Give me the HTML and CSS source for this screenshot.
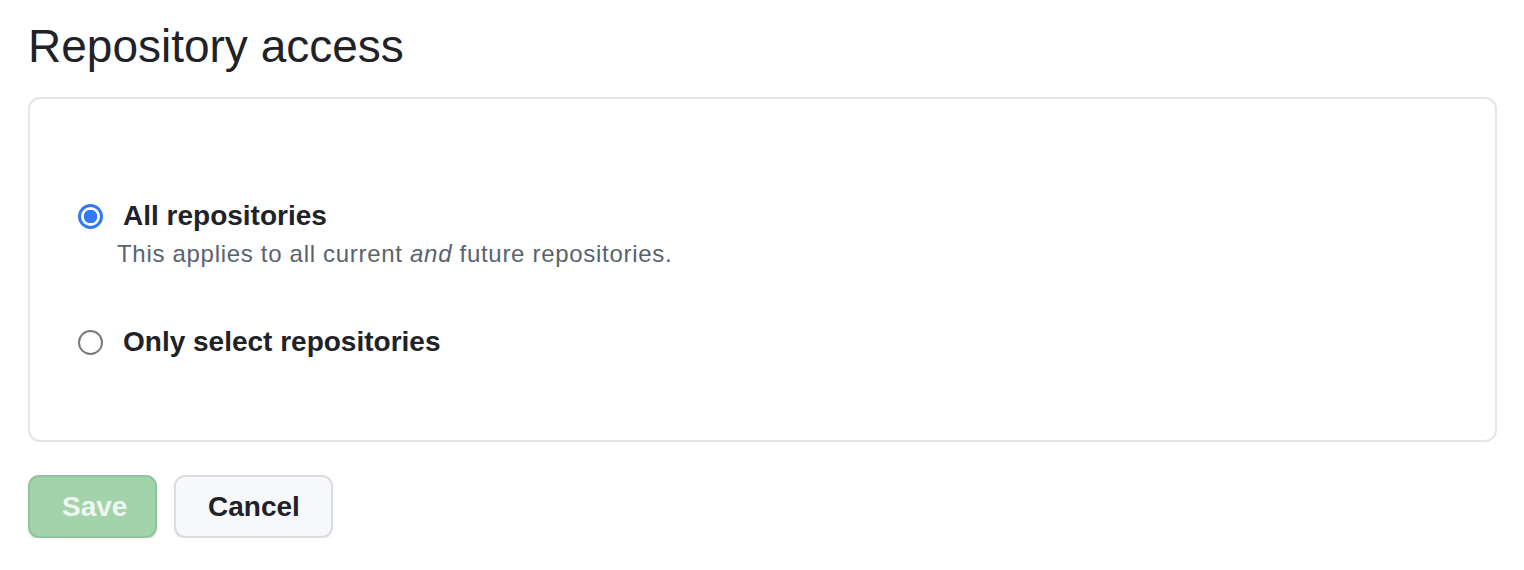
FILE: index.html
```html
<!DOCTYPE html>
<html lang="en">
<head>
<meta charset="utf-8">
<title>Repository access</title>
<link rel="stylesheet" href="styles.css">
</head>
<body>
<main class="page">
  <h1 class="title">Repository access</h1>
  <form class="form">
    <div class="box">
      <div class="option">
        <label class="option-row">
          <input class="radio" type="radio" name="access" checked>
          <span class="option-label">All repositories</span>
        </label>
        <p class="option-note">This applies to all current <em>and</em> future repositories.</p>
      </div>
      <div class="option option-second">
        <label class="option-row">
          <input class="radio" type="radio" name="access">
          <span class="option-label">Only select repositories</span>
        </label>
      </div>
    </div>
    <div class="actions">
      <button type="button" class="btn btn-save" disabled>Save</button>
      <button type="button" class="btn btn-cancel">Cancel</button>
    </div>
  </form>
</main>
</body>
</html>
```

FILE: styles.css
```css
html, body {
  margin: 0;
  padding: 0;
  background: #ffffff;
}

body {
  font-family: "Liberation Sans", Arial, sans-serif;
  color: #1f2328;
}

.page {
  padding: 17px 27px 0 28px;
}

.title {
  margin: 0;
  font-size: 46px;
  font-weight: 400;
  line-height: 58px;
  color: #1f2328;
}

.form {
  margin: 22px 0 0 0;
}

.box {
  border: 2px solid #e3e5e8;
  border-radius: 12px;
  padding: 99px 47px 80px 48px;
  display: flex;
  flex-direction: column;
}

.option-row {
  display: flex;
  align-items: center;
  gap: 20px;
  height: 36px;
}

.radio {
  -webkit-appearance: none;
  appearance: none;
  margin: 0;
  width: 25px;
  height: 25px;
  border-radius: 50%;
  border: 2px solid #7a7a7a;
  background: #ffffff;
  box-sizing: border-box;
  flex: none;
}

.radio:checked {
  border: 3px solid #3478f6;
  background: radial-gradient(circle, #3478f6 0 6.5px, #ffffff 7px);
}

.option-label {
  font-size: 28px;
  font-weight: 700;
  line-height: 36px;
  color: #1f2328;
}

.option-note {
  margin: 4px 0 0 39px;
  font-size: 24px;
  line-height: 32px;
  letter-spacing: 0.7px;
  color: #59636e;
}

.option-note em {
  font-style: italic;
}

.option-second {
  margin-top: 54px;
}

.actions {
  display: flex;
  gap: 17px;
  margin-top: 33px;
}

.btn {
  height: 63px;
  padding: 0 32px;
  border-radius: 11px;
  border: 2px solid;
  font-family: "Liberation Sans", Arial, sans-serif;
  font-size: 28px;
  font-weight: 700;
  box-sizing: border-box;
}

.btn-save {
  width: 129px;
  background: #a2d3aa;
  border-color: #8fc59a;
  color: #eef8f0;
  box-shadow: 0 2px 2px rgba(31, 35, 40, 0.12);
}

.btn-cancel {
  width: 159px;
  background: #f6f8fa;
  border-color: #dadcdf;
  color: #1f2328;
  box-shadow: 0 2px 2px rgba(31, 35, 40, 0.06);
}
```
